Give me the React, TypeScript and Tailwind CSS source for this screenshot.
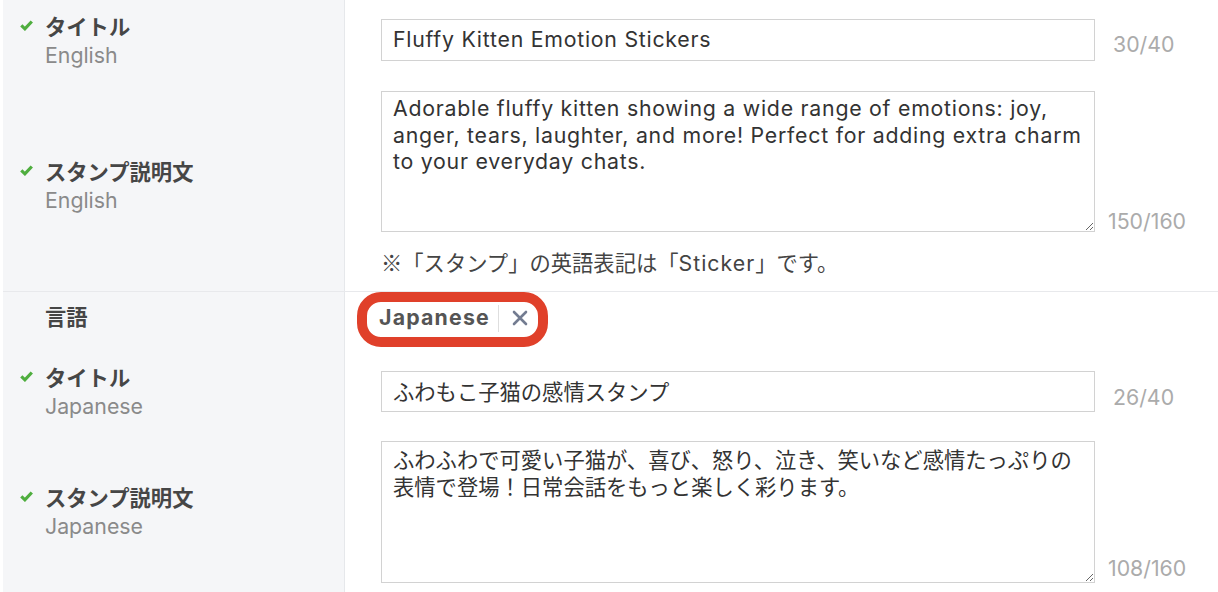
import React from "react";

const FONT = "font-['Inter','Noto_Sans_CJK_JP',sans-serif]";

interface LabelProps {
  title: string;
  sub?: string;
  checked?: boolean;
}

const CheckIcon: React.FC = () => (
  <svg viewBox="0 0 13 11" className="w-[13px] h-[11px] shrink-0 -ml-[1px]">
    <path d="M1.3 5.4 L4.9 8.8 L11.8 1.5" fill="none" stroke="#4fae3f" strokeWidth="3.2" />
  </svg>
);

const FieldLabel: React.FC<LabelProps> = ({ title, sub, checked }) => (
  <div className="flex items-start">
    <div className="w-[24px] pt-[7px] flex">{checked && <CheckIcon />}</div>
    <div className="flex flex-col">
      <span className="text-[21.3px] leading-[28px] font-bold text-[#464646]">{title}</span>
      {sub && <span className="text-[21.3px] leading-[28px] text-[#8a8a8a]">{sub}</span>}
    </div>
  </div>
);

const Counter: React.FC<{ text: string; className?: string }> = ({ text, className }) => (
  <span className={`text-[21.3px] leading-[26px] text-[#ababab] whitespace-nowrap ${className ?? ""}`}>{text}</span>
);

export default function App() {
  return (
    <div className={`w-[1218px] h-[592px] overflow-hidden bg-white pl-[3px] ${FONT}`}>
      {/* English title */}
      <div className="flex h-[80px]">
        <div className="w-[342px] shrink-0 bg-[#f5f6f8] border-r border-[#e6e8eb] flex items-center pl-[18px] pt-[2px]">
          <FieldLabel title="タイトル" sub="English" checked />
        </div>
        <div className="flex-1 flex items-center pl-[36px]">
          <div className="flex items-end">
            <input
              readOnly
              value="Fluffy Kitten Emotion Stickers"
              className="w-[714px] h-[42px] border border-[#d2d2d2] px-[11px] pb-[2px] text-[21.3px] tracking-[0.75px] text-[#333] outline-none"
            />
            <Counter text="30/40" className="ml-[18px] mb-[4px]" />
          </div>
        </div>
      </div>

      {/* English description */}
      <div className="flex h-[212px] border-b border-[#e8e9ec]">
        <div className="w-[342px] shrink-0 bg-[#f5f6f8] border-r border-[#e6e8eb] flex items-center pl-[18px]">
          <FieldLabel title="スタンプ説明文" sub="English" checked />
        </div>
        <div className="flex-1 flex flex-col pl-[36px] pt-[11px]">
          <div className="flex items-end">
            <textarea
              readOnly
              value="Adorable fluffy kitten showing a wide range of emotions: joy, anger, tears, laughter, and more! Perfect for adding extra charm to your everyday chats."
              className="w-[714px] h-[141px] border border-[#d2d2d2] pl-[11px] pr-[8px] pt-[3px] text-[21.3px] leading-[26.5px] tracking-[0.75px] text-[#333] outline-none"
            />
            <Counter text="150/160" className="ml-[13px] mb-[-2px]" />
          </div>
          <p className="mt-[17px] text-[21.3px] leading-[26px] text-[#444]">
            <span className="font-['Noto_Sans_CJK_JP',sans-serif]">※</span>「スタンプ」の英語表記は「<span className="tracking-[1px]">Sticker</span>」です。
          </p>
        </div>
      </div>

      {/* Language */}
      <div className="flex h-[52px]">
        <div className="w-[342px] shrink-0 bg-[#f5f6f8] border-r border-[#e6e8eb] flex items-center pl-[18px] pb-[2px]">
          <FieldLabel title="言語" />
        </div>
        <div className="flex-1 flex items-start pl-[12px]">
          <div className="relative z-10 flex items-center h-[55px] border-[10px] border-[#e0402a] rounded-[24px] bg-white pl-[12px] pr-[10px]">
            <span className="text-[21.3px] font-bold tracking-[1.2px] text-[#555] leading-none -mt-[3px]">Japanese</span>
            <span className="ml-[8px] w-px h-[27px] bg-[#dedede] -mt-[3px]" />
            <svg viewBox="0 0 16 16" className="ml-[13px] w-[16px] h-[16px] -mt-[3px]">
              <path d="M2 2 L14 14 M14 2 L2 14" stroke="#737c91" strokeWidth="2.6" strokeLinecap="round" />
            </svg>
          </div>
        </div>
      </div>

      {/* Japanese title */}
      <div className="flex h-[95px]">
        <div className="w-[342px] shrink-0 bg-[#f5f6f8] border-r border-[#e6e8eb] flex items-center pl-[18px]">
          <FieldLabel title="タイトル" sub="Japanese" checked />
        </div>
        <div className="flex-1 flex items-center pl-[36px]">
          <div className="flex items-end">
            <input
              readOnly
              value="ふわもこ子猫の感情スタンプ"
              className="w-[714px] h-[41px] border border-[#d2d2d2] px-[11px] pb-[2px] text-[21.3px] text-[#333] outline-none"
            />
            <Counter text="26/40" className="ml-[18px] mb-[2px]" />
          </div>
        </div>
      </div>

      {/* Japanese description */}
      <div className="flex h-[153px]">
        <div className="w-[342px] shrink-0 bg-[#f5f6f8] border-r border-[#e6e8eb] flex items-center pl-[18px] pb-[7px]">
          <FieldLabel title="スタンプ説明文" sub="Japanese" checked />
        </div>
        <div className="flex-1 flex items-start pl-[36px] pt-[2px]">
          <div className="flex items-end">
            <textarea
              readOnly
              value="ふわふわで可愛い子猫が、喜び、怒り、泣き、笑いなど感情たっぷりの表情で登場！日常会話をもっと楽しく彩ります。"
              className="w-[714px] h-[142px] border border-[#d2d2d2] pl-[11px] pr-[10px] pt-[5px] text-[21.3px] leading-[26.5px] text-[#333] outline-none"
            />
            <Counter text="108/160" className="ml-[13px] mb-[2px]" />
          </div>
        </div>
      </div>
    </div>
  );
}
